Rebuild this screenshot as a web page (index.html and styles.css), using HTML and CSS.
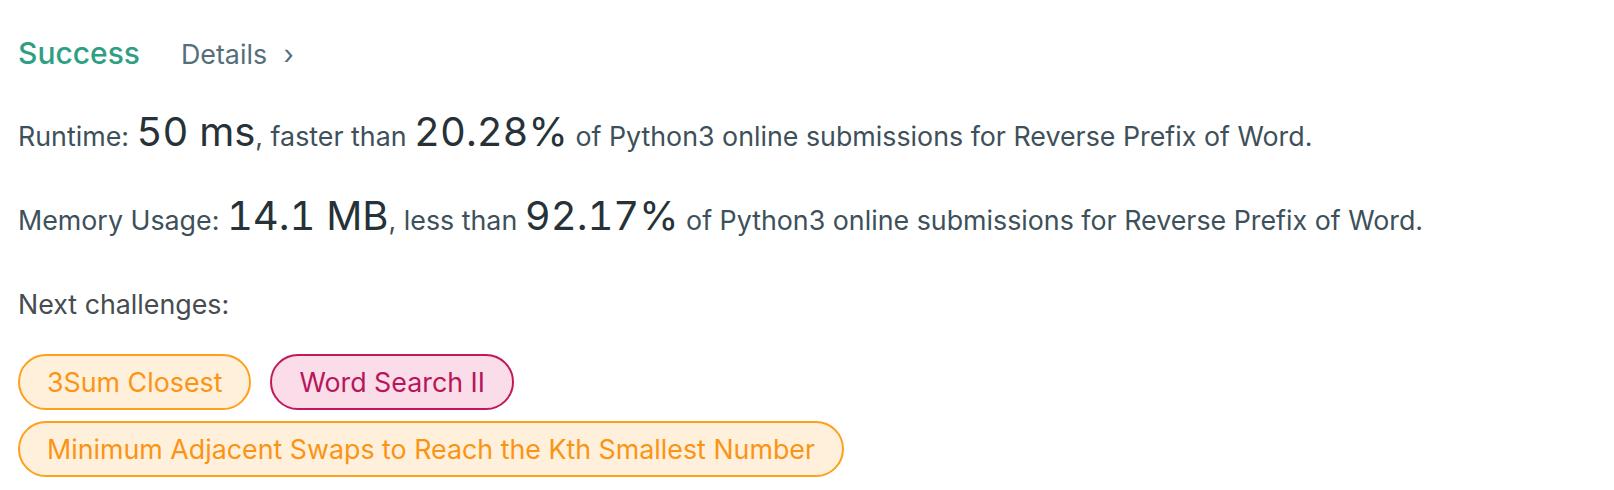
FILE: index.html
```html
<!DOCTYPE html>
<html>
<head>
<meta charset="utf-8">
<link rel="stylesheet" href="styles.css">
</head>
<body>
<div class="result">
  <div class="header">
    <span class="status">Success</span>
    <a class="details">Details <span class="chev">›</span></a>
  </div>
  <p class="stat">Runtime: <span class="big">50 ms</span>, faster than <span class="big">20.28%</span> of Python3 online submissions for Reverse Prefix of Word.</p>
  <p class="stat">Memory Usage: <span class="big">14.1 MB</span>, less than <span class="big">92.17%</span> of Python3 online submissions for Reverse Prefix of Word.</p>
  <p class="next">Next challenges:</p>
  <div class="tags">
    <a class="tag medium">3Sum Closest</a>
    <a class="tag hard">Word Search II</a>
    <a class="tag medium">Minimum Adjacent Swaps to Reach the Kth Smallest Number</a>
  </div>
</div>
</body>
</html>
```
FILE: styles.css
```css
html, body {
  margin: 0;
  padding: 0;
  background: #ffffff;
}
body {
  font-family: Inter, "Noto Sans", "Liberation Sans", sans-serif;
  font-size: 26.8px;
  color: #3e505a;
}
.result {
  padding: 35px 18px 0 18px;
}
.header {
  display: flex;
  align-items: baseline;
  gap: 41px;
  height: 59px;
}
.status {
  color: #2f9f84;
  font-size: 30px;
  font-weight: 500;
}
.details {
  color: #546e7a;
  font-size: 26.8px;
}
.chev {
  margin-left: 9px;
}
.stat {
  margin: 0;
  line-height: 84px;
  white-space: pre;
}
.big {
  font-size: 40px;
  line-height: 1;
  color: #263238;
  font-variant-numeric: tabular-nums;
}
.next {
  margin: 0;
  line-height: 84px;
  color: #464c50;
}
.tags {
  display: flex;
  flex-wrap: wrap;
  gap: 11px 19px;
  padding-top: 8px;
  max-width: 1100px;
}
.tag {
  display: inline-flex;
  align-items: center;
  height: 56px;
  box-sizing: border-box;
  padding: 0 27px;
  border-radius: 28px;
  border: 2px solid;
}
.medium {
  color: #fb9414;
  border-color: #ff9f1c;
  background: #fff0db;
}
.hard {
  color: #b8165a;
  border-color: #c2185b;
  background: #fadde8;
}
```
